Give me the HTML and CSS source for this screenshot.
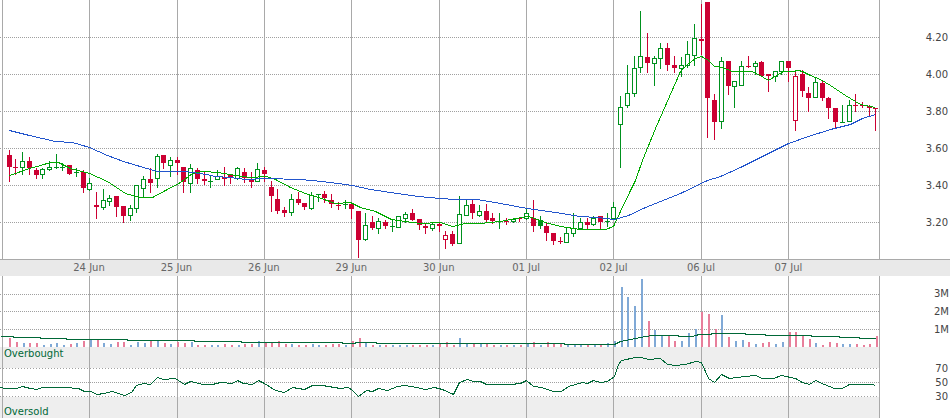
FILE: index.html
```
<!DOCTYPE html>
<html lang="en">
<head>
    <meta charset="UTF-8">
    <meta name="viewport" content="width=device-width, initial-scale=1.0">
    <title>Price chart</title>
    <link rel="stylesheet" href="styles.css">
</head>
<body>
    <main class="chart">
        <!-- Price -->
        <section class="panel price-panel">
            <svg id="price" class="plot" viewBox="0 0 880 259" preserveAspectRatio="none"></svg>
            <div class="scale">
                <span>4.20</span>
                <span>4.00</span>
                <span>3.80</span>
                <span>3.60</span>
                <span>3.40</span>
                <span>3.20</span>
            </div>
        </section>

        <!-- Dates -->
        <div class="dates">
            <div class="dates-row">
                <span>24 Jun</span>
                <span>25 Jun</span>
                <span>26 Jun</span>
                <span>29 Jun</span>
                <span>30 Jun</span>
                <span>01 Jul</span>
                <span>02 Jul</span>
                <span>06 Jul</span>
                <span>07 Jul</span>
            </div>
        </div>

        <!-- Volume -->
        <section class="panel volume-panel">
            <svg id="volume" class="plot" viewBox="0 0 880 71" preserveAspectRatio="none"></svg>
            <div class="scale">
                <span>3M</span>
                <span>2M</span>
                <span>1M</span>
            </div>
        </section>

        <!-- RSI -->
        <section class="panel rsi-panel">
            <svg id="rsi" class="plot" viewBox="0 0 880 71" preserveAspectRatio="none"></svg>
            <div class="scale">
                <span>70</span>
                <span>50</span>
                <span>30</span>
            </div>
            <span class="zone zone-top">Overbought</span>
            <span class="zone zone-bottom">Oversold</span>
        </section>
    </main>

    <script src="chart.js"></script>
</body>
</html>
```

FILE: styles.css
```
body {
    margin: 0;
    background: #fff;
    font-family: "DejaVu Sans", Verdana, sans-serif;
    font-size: 10px;
    color: #444;
}

/* Panels */
.panel {
    position: relative;
    display: flex;
    align-items: flex-start;
}
.plot {
    flex: 1;
    min-width: 0;
    display: block;
    shape-rendering: crispEdges;
}
.price-panel .plot {
    height: 259px;
}
.volume-panel .plot,
.rsi-panel .plot {
    height: 71px;
}

/* Value labels on the right */
.scale {
    width: 70px;
    box-sizing: border-box;
    padding-right: 2px;
    display: flex;
    flex-direction: column;
    text-align: right;
}
.price-panel .scale {
    padding-top: 19px;
    line-height: 37px;
}
.volume-panel .scale {
    padding-top: 9px;
    padding-right: 1px;
    line-height: 18px;
}
.rsi-panel .scale {
    padding-top: 15px;
    line-height: 14px;
}

/* Date bar */
.dates {
    border-top: 1px solid #a9a9a9;
    background: #e9e9e9;
    padding-right: 70px;
    color: #666;
}
.dates-row {
    display: flex;
    padding: 0 5.45% 0 5.15%;
    line-height: 16px;
}
.dates-row span {
    flex: 1;
    text-align: center;
}

/* Overbought / oversold captions */
.zone {
    position: absolute;
    left: 4px;
    line-height: 14px;
    color: #006837;
}
.zone-top {
    top: 0;
}
.zone-bottom {
    bottom: -1px;
}

/* Drawing */
.grid-x {
    stroke: #a9a9a9;
}
.grid-y {
    stroke: #a0a0a0;
    stroke-dasharray: 1 1;
}
.grid-limit {
    stroke-dasharray: 1 2;
}
.band {
    fill: #eee;
}
.up {
    fill: #fff;
    stroke: #00911e;
}
.up-solid {
    fill: #00911e;
    stroke: #00911e;
}
.down {
    fill: #cc0033;
    stroke: #cc0033;
}
.down-hollow {
    fill: #fff;
    stroke: #cc0033;
}
.line {
    fill: none;
    stroke-width: 1;
}
.line-fast {
    stroke: #00aa00;
}
.line-slow {
    stroke: #2255cc;
}
.line-dark {
    stroke: #006837;
}
.bar-up {
    fill: #80a9d6;
}
.bar-down {
    fill: #e87f9b;
}
```

FILE: chart.js
```
const NS = 'http://www.w3.org/2000/svg';
const START = 9.2;
const STEP = 6.719;
const DAYS = [2, 89, 177, 264, 351, 439, 526, 613, 701, 788, 879];

// high, low, body top, body bottom, type
// r = down, g = up, G = up solid, R = down hollow
const candles = `
150 182 155 167 r,159 175 167 168 r,152 175 161 168 g,157 175 161 168 r,168 179 170 175 r,
168 179 169 175 g,161 171 167 170 g,154 169 167 168 g,163 171 167 168 g,165 175 165 174 r,
168 177 172 173 g,170 193 172 188 r,178 191 183 190 g,192 219 205 207 r,189 210 200 208 g,
195 206 198 202 g,196 217 196 207 r,206 223 206 216 r,205 221 208 216 g,185 213 185 209 g,
176 197 179 189 g,168 193 179 183 r,154 188 156 179 g,155 169 155 163 r,157 177 160 166 g,
157 175 160 163 r,167 193 167 182 r,164 193 168 184 g,168 184 170 179 r,171 185 179 181 r,
176 188 181 182 g,170 180 176 180 g,167 186 177 179 r,174 184 175 178 r,167 180 168 179 g,
168 183 172 178 r,172 188 179 182 r,163 182 169 182 g,167 182 170 174 r,181 212 187 196 r,
189 214 199 211 r,207 217 210 213 r,194 216 199 213 g,192 205 199 203 r,203 210 203 207 r,
192 210 195 209 g,194 202 194 195 g,191 203 194 198 r,194 208 200 204 r,202 210 205 206 r,
200 209 204 205 g,204 219 204 209 r,211 258 211 240 r,213 241 225 240 g,216 230 222 228 r,
218 234 221 229 g,220 229 222 226 r,219 232 226 227 g,216 228 216 228 g,212 223 214 219 g,
209 221 213 220 r,219 230 219 225 r,224 234 226 228 r,223 231 224 229 g,223 232 224 226 r,
231 249 235 240 R,231 246 234 244 r,196 244 214 244 g,199 216 205 216 g,200 219 204 213 r,
205 217 211 216 g,204 222 211 220 r,213 224 218 221 r,213 229 221 222 g,218 225 221 222 r,
218 223 219 222 g,218 222 218 219 r,209 220 213 219 g,200 232 218 226 r,216 229 220 226 G,
223 241 226 233 r,233 245 233 241 r,237 244 241 242 r,227 243 233 243 g,213 237 228 234 g,
218 230 222 229 g,218 229 222 225 r,216 226 218 225 g,216 229 216 222 r,213 227 221 222 g,
202 220 207 219 g,96 168 107 125 g,65 108 93 106 g,56 97 68 94 g,11 73 56 68 g,
33 73 57 63 r,56 86 58 64 g,43 69 48 59 g,43 71 48 65 r,56 73 65 68 r,
57 77 65 69 g,41 68 54 66 g,24 66 38 56 g,4 55 39 41 r,2 138 2 98 r,
94 140 100 122 r,57 129 61 122 g,61 95 61 86 r,81 108 81 87 g,61 86 66 86 g,
56 68 66 67 r,61 75 63 67 g,61 77 62 76 r,74 92 74 76 r,71 82 71 77 g,
61 75 61 72 g,61 82 61 68 r,71 131 76 121 R,70 97 74 91 r,87 112 93 98 r,
77 98 82 98 g,81 101 83 98 r,97 119 98 108 r,108 129 108 122 r,105 123 122 123 g,
100 122 105 122 g,94 112 105 106 r,102 108 105 106 r,105 117 106 108 r,108 131 108 109 r`;

// bar height, p = down, b = up
const volumes = `9p 5p 4b 4p 4p 2b 3b 4b 2b 3p 4b 6p 7b 7p 4b 3b 5p 5p 2b 5b 4b 6p 6b 4p 3b
5p 4p 5b 2p 2p 2b 2b 3p 2p 2b 3p 3p 6b 4p 4p 6p 3p 3b 2p 2p 3b 2b 2p 3p 3p
2b 6p 9p 4b 2p 2b 2p 2b 2b 2b 2p 2p 2p 2b 3p 5p 2p 9b 3b 3p 3b 3p 2p 2b 2p
2b 2p 4b 5p 2b 5p 4p 4p 2b 2b 2b 2p 2b 2p 4b 6b 60b 50b 41b 68b 26p 17b 11b 11p 6p
6b 14b 18b 35p 33p 18p 32b 10p 6b 7b 5p 3b 4p 5p 3b 5b 15p 15p 11p 8p 4b 2p 5p 4p 3b
3b 3p 2p 3p 11p`;

const slow = `9,130 29,135 55,141 72,142 89,147 107,155 123,161 143,167 157,171 185,171 206,174
215,176 230,177 245,179 265,178 300,179 322,181 345,184 352,185 370,189 390,192 418,196 440,198
455,199 476,199 500,203 527,208 555,212 580,216 597,217 614,219 628,215 645,207 680,193 707,180
720,176 740,167 768,153 788,143 808,136 830,129 850,124 862,118 875,114`;

const fast = `9,175 29,168 40,165 50,162 58,162 70,168 89,173 107,181 125,193 140,197 152,197
165,190 180,182 192,173 202,171 218,172 235,175 250,177 266,176 275,179 290,187 305,193 318,197
335,203 350,202 360,207 375,211 391,219 405,221 420,223 440,222 452,226 465,223 480,223 500,221
515,218 528,216 545,222 560,226 580,229 605,229 613,226 620,211 630,190 635,180 642,160 655,128
662,112 680,71 687,64 695,58 701,56 708,60 714,66 722,67 732,71 751,71 758,74 768,80 776,75
783,71 792,71 798,70 802,71 810,75 820,79 830,85 845,95 860,104 875,107`;

const volumeAverage = `0,60 13,60 13,61 40,61 40,62 66,62 66,63 127,63 127,64 194,64 194,65
241,65 241,66 342,66 342,67 355,67 355,66 376,66 376,67 564,67 564,68 614,68 620,65 630,63
645,60 652,59 678,59 678,60 690,60 697,59 697,58 711,58 711,57 745,57 745,58 765,58 765,59
811,59 811,60 839,60 839,61 859,61 859,62 875,62`;

const rsi = `0,40 5,41 16,41 22,39 30,41 36,42 42,40 65,40 78,41 84,44 90,44 97,47 103,46
112,44 124,48 131,45 136,38 143,36 150,37 157,30 163,32 175,31 184,37 190,34 203,37 212,37
220,35 232,36 237,33 243,36 252,37 258,33 264,36 275,43 284,45 292,40 304,42 312,38 322,38
340,41 348,40 352,43 358,49 366,43 372,44 378,41 387,43 397,39 405,38 416,40 425,42 434,40
442,42 453,47 459,35 467,32 473,34 480,34 486,37 510,37 520,36 526,33 533,39 541,40 553,44
561,44 568,39 582,35 587,36 593,33 600,35 607,34 614,29 618,17 621,13 635,10 641,10 648,12
660,11 667,17 675,18 685,17 695,14 701,15 708,31 714,35 721,27 729,31 745,29 755,28 762,31
773,31 781,28 795,31 802,35 809,37 815,33 824,37 834,41 842,41 849,37 873,37 875,39`;

function add(svg, tag, attrs) {
    const el = document.createElementNS(NS, tag);
    for (const key in attrs) {
        el.setAttribute(key, attrs[key]);
    }
    svg.appendChild(el);
}

function drawRows(svg, rows, name) {
    rows.forEach(y => add(svg, 'line', { class: name, x1: 0, x2: 879, y1: y + 0.5, y2: y + 0.5 }));
}

function drawDays(svg, height) {
    DAYS.forEach(x => add(svg, 'line', { class: 'grid-x', x1: x + 0.5, x2: x + 0.5, y1: 0, y2: height }));
}

function drawLine(svg, points, name) {
    // centre the stroke on the pixel row
    add(svg, 'polyline', { class: 'line ' + name, points: points, transform: 'translate(0.5 0.5)' });
}

// Price panel
const priceSvg = document.getElementById('price');
const types = { r: 'down', g: 'up', G: 'up-solid', R: 'down-hollow' };
drawRows(priceSvg, [37, 74, 111, 148, 185, 222], 'grid-y');
drawDays(priceSvg, 259);
candles.split(',').forEach((row, i) => {
    const [high, low, top, bottom, type] = row.trim().split(' ');
    const x = Math.floor(START + STEP * i);
    add(priceSvg, 'line', { class: types[type], x1: x + 0.5, x2: x + 0.5, y1: high, y2: low });
    if (bottom - top === 1) {
        add(priceSvg, 'line', { class: types[type], x1: x - 2, x2: x + 3, y1: +top + 0.5, y2: +top + 0.5 });
    } else {
        add(priceSvg, 'rect', { class: types[type], x: x - 1.5, y: +top + 0.5, width: 4, height: bottom - top - 1 });
    }
});
drawLine(priceSvg, fast, 'line-fast');
drawLine(priceSvg, slow, 'line-slow');

// Volume panel
const volumeSvg = document.getElementById('volume');
drawRows(volumeSvg, [18, 35, 53], 'grid-y');
drawDays(volumeSvg, 71);
volumes.split(/\s+/).forEach((item, i) => {
    const height = parseInt(item);
    add(volumeSvg, 'rect', {
        class: item.endsWith('b') ? 'bar-up' : 'bar-down',
        x: Math.floor(START + 0.5 + STEP * i),
        y: 71 - height,
        width: 2,
        height: height
    });
});
drawLine(volumeSvg, volumeAverage, 'line-dark');

// RSI panel
const rsiSvg = document.getElementById('rsi');
add(rsiSvg, 'rect', { class: 'band', x: 0, y: 0, width: 879, height: 21 });
add(rsiSvg, 'rect', { class: 'band', x: 0, y: 50, width: 879, height: 21 });
drawRows(rsiSvg, [21, 49], 'grid-y grid-limit');
drawRows(rsiSvg, [35], 'grid-y');
drawDays(rsiSvg, 71);
drawLine(rsiSvg, rsi, 'line-dark');
```
